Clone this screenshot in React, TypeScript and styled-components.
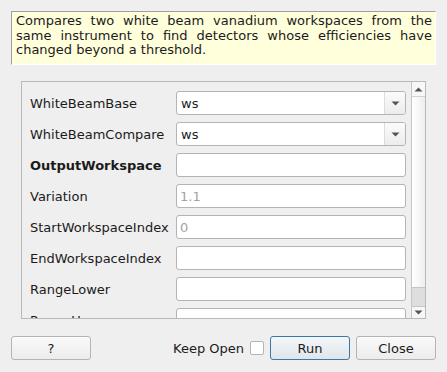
import React from "react";
import styled, { createGlobalStyle } from "styled-components";

const Global = createGlobalStyle`
  html, body { margin: 0; padding: 0; background: #efefef; }
  body { font-family: "DejaVu Sans", "Liberation Sans", sans-serif; font-size: 13px; color: #1b1b1b; }
  * { box-sizing: border-box; }
`;

const Dialog = styled.div`
  width: 447px;
  height: 372px;
  padding: 11px 11px 0 11px;
  display: flex;
  flex-direction: column;
  background: #efefef;
`;

const Description = styled.div`
  height: 54px;
  background: #ffffdc;
  border-top: 1px solid #9f9f9f;
  border-left: 1px solid #9f9f9f;
  border-right: 1px solid #ffffff;
  border-bottom: 1px solid #ffffff;
  padding: 2px 3px 0 4px;
  line-height: 14.5px;
  text-align: justify;
  font-size: 13px;
`;

const ScrollFrame = styled.div`
  margin: 16px 10px 0 10px;
  height: 238px;
  border: 1px solid #b9b9b9;
  display: flex;
  overflow: hidden;
`;

const Content = styled.div`
  flex: 1;
  padding: 9px 5px 0 8px;
  display: flex;
  flex-direction: column;
  gap: 7px;
  overflow: hidden;
`;

const Row = styled.div`
  display: flex;
  align-items: center;
  height: 24px;
  flex-shrink: 0;
`;

const Label = styled.div<{ $bold?: boolean }>`
  width: 146px;
  font-weight: ${(p) => (p.$bold ? "bold" : "normal")};
  white-space: nowrap;
`;

const Field = styled.div<{ $placeholder?: boolean }>`
  width: 230px;
  height: 24px;
  background: #ffffff;
  border: 1px solid #b4b4b4;
  border-radius: 3px;
  display: flex;
  align-items: center;
  padding-left: 3px;
  color: ${(p) => (p.$placeholder ? "#a3a3a3" : "#1b1b1b")};
`;

const ComboBox = styled.div`
  width: 230px;
  height: 24px;
  background: #ffffff;
  border: 1px solid #b4b4b4;
  border-radius: 3px;
  display: flex;
  align-items: stretch;
  overflow: hidden;
`;

const ComboText = styled.div`
  flex: 1;
  display: flex;
  align-items: center;
  padding-left: 4px;
`;

const ComboArrow = styled.div`
  width: 21px;
  border-left: 1px solid #dcdcdc;
  background: linear-gradient(#fbfbfb, #ececec);
  display: flex;
  align-items: center;
  justify-content: center;
`;

const ScrollBar = styled.div`
  width: 14px;
  border-left: 1px solid #c6c6c6;
  display: flex;
  flex-direction: column;
`;

const ScrollButton = styled.div<{ $h: number; $top?: boolean }>`
  height: ${(p) => p.$h}px;
  display: flex;
  align-items: center;
  justify-content: center;
  background: #f7f7f7;
  ${(p) => (p.$top ? "border-bottom: 1px solid #d2d2d2;" : "border-top: 1px solid #c6c6c6;")}
`;

const Track = styled.div`
  flex: 1;
  background: linear-gradient(90deg, #ffffff, #eeeeee);
`;

const Handle = styled.div`
  height: 19px;
  background: #dedede;
  border-top: 1px solid #c6c6c6;
`;

const Footer = styled.div`
  margin-top: 17px;
  display: flex;
  align-items: center;
  height: 24px;
`;

const Button = styled.button<{ $primary?: boolean }>`
  width: 80px;
  height: 24px;
  font-family: "DejaVu Sans", "Liberation Sans", sans-serif;
  font-size: 13px;
  color: #1b1b1b;
  border-radius: 3px;
  border: 1px solid ${(p) => (p.$primary ? "#3f76a6" : "#b4b4b4")};
  background: ${(p) =>
    p.$primary ? "linear-gradient(#f4f7fa, #dfe5eb)" : "linear-gradient(#f9f9f9, #ececec)"};
  padding: 0;
`;

const Spacer = styled.div`
  flex: 1;
`;

const KeepOpen = styled.span`
  margin-right: 6px;
`;

const CheckBox = styled.div`
  width: 14px;
  height: 14px;
  background: #ffffff;
  border: 1px solid #b4b4b4;
  border-radius: 2px;
  margin-right: 6px;
`;

const Gap = styled.div`
  width: 6px;
`;

const Tri = ({ up }: { up?: boolean }) => (
  <svg width="9" height="5" viewBox="0 0 9 5">
    <path d={up ? "M0.5 4.5 L4.5 0.5 L8.5 4.5 Z" : "M0.5 0.5 L8.5 0.5 L4.5 4.5 Z"} fill="#555" />
  </svg>
);

const rows: { label: string; kind: "combo" | "text"; value?: string; placeholder?: string; bold?: boolean }[] = [
  { label: "WhiteBeamBase", kind: "combo", value: "ws" },
  { label: "WhiteBeamCompare", kind: "combo", value: "ws" },
  { label: "OutputWorkspace", kind: "text", bold: true },
  { label: "Variation", kind: "text", placeholder: "1.1" },
  { label: "StartWorkspaceIndex", kind: "text", placeholder: "0" },
  { label: "EndWorkspaceIndex", kind: "text" },
  { label: "RangeLower", kind: "text" },
  { label: "RangeUpper", kind: "text" },
];

export default function App() {
  return (
    <>
      <Global />
      <Dialog>
        <Description>
          Compares two white beam vanadium workspaces from the same instrument to find detectors whose
          efficiencies have changed beyond a threshold.
        </Description>
        <ScrollFrame>
          <Content>
            {rows.map((r) => (
              <Row key={r.label}>
                <Label $bold={r.bold}>{r.label}</Label>
                {r.kind === "combo" ? (
                  <ComboBox>
                    <ComboText>{r.value}</ComboText>
                    <ComboArrow>
                      <Tri />
                    </ComboArrow>
                  </ComboBox>
                ) : (
                  <Field $placeholder={!!r.placeholder}>{r.placeholder ?? r.value ?? ""}</Field>
                )}
              </Row>
            ))}
          </Content>
          <ScrollBar>
            <ScrollButton $h={15} $top>
              <Tri up />
            </ScrollButton>
            <Track />
            <Handle />
            <ScrollButton $h={12}>
              <Tri />
            </ScrollButton>
          </ScrollBar>
        </ScrollFrame>
        <Footer>
          <Button>?</Button>
          <Spacer />
          <KeepOpen>Keep Open</KeepOpen>
          <CheckBox />
          <Button $primary>Run</Button>
          <Gap />
          <Button>Close</Button>
        </Footer>
      </Dialog>
    </>
  );
}
